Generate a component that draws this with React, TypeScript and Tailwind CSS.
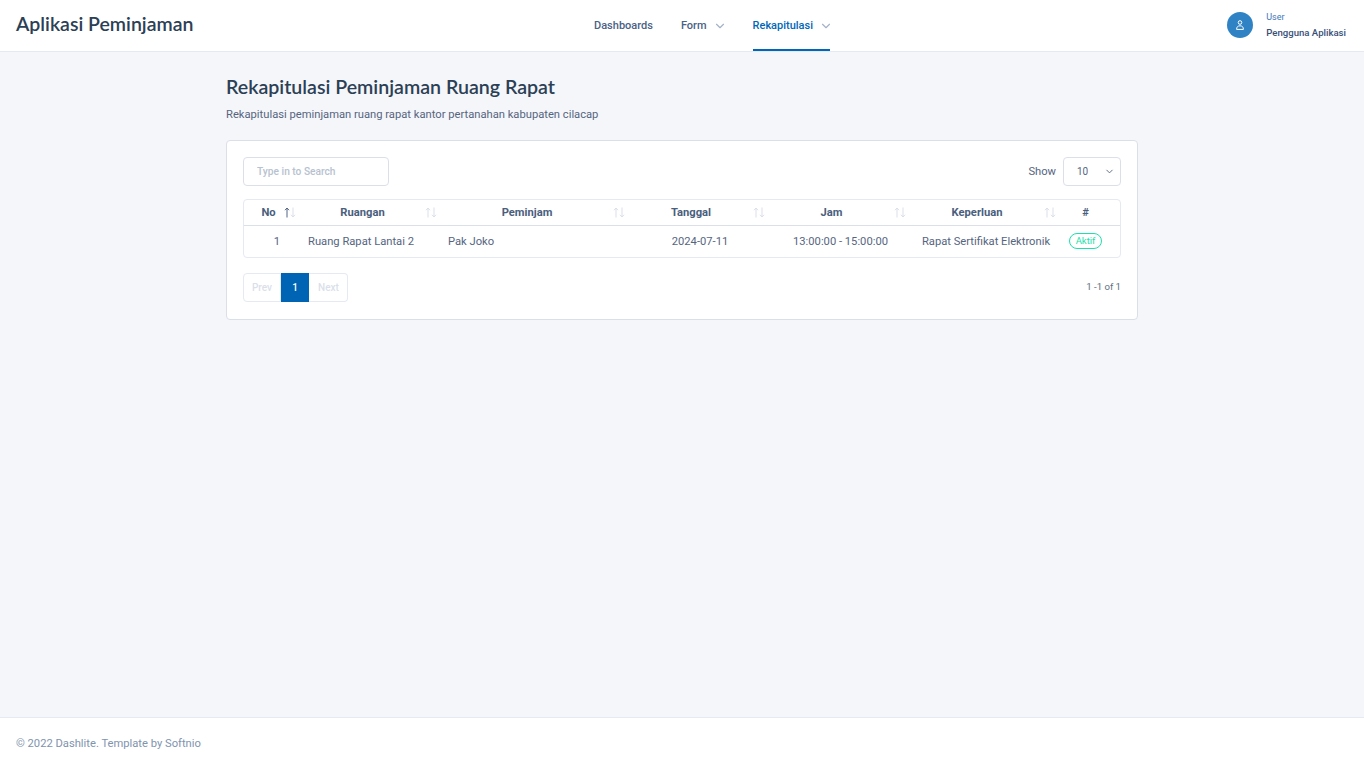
import React from 'react';
import { ChevronDown } from 'lucide-react';

const heading = "font-['Lato','Noto_Sans',sans-serif]";

const columns = [
  { label: 'No', width: 'w-[56px]', textPad: 'pl-[9px]', arrowActive: true },
  { label: 'Ruangan', width: 'w-[141px]', textPad: 'pl-0' },
  { label: 'Peminjam', width: 'w-[188px]', textPad: 'pl-0' },
  { label: 'Tanggal', width: 'w-[140px]', textPad: 'pl-0' },
  { label: 'Jam', width: 'w-[141px]', textPad: 'pl-0' },
  { label: 'Keperluan', width: 'w-[150px]', textPad: 'pl-0' },
];

function SortArrows({ active }: { active?: boolean }) {
  return (
    <svg width="12" height="11" viewBox="0 0 12 11" fill="none" strokeWidth="1" className="shrink-0">
      <path d="M3 10.5V1M1 3.2 3 1l2 2.2" stroke={active ? '#526484' : '#dbdfea'} />
      <path d="M9 .5V10M7 7.8 9 10l2-2.2" stroke="#dbdfea" />
    </svg>
  );
}

function UserIcon() {
  return (
    <svg width="8" height="10" viewBox="0 0 8 10" fill="none" stroke="white" strokeWidth="1">
      <circle cx="4" cy="2.5" r="1.8" />
      <path d="M.6 9.4c0-2.4 1.2-3.6 3.4-3.6s3.4 1.2 3.4 3.6z" />
    </svg>
  );
}

export default function App() {
  return (
    <div className="min-h-[767px] flex flex-col bg-[#f5f6fa] font-['Roboto',sans-serif] text-[#56657f] text-[11.2px]">
      <header className="h-[52px] bg-white border-b border-[#e5e9f2] flex items-stretch pl-4 pr-[18px]">
        <div className={`${heading} text-[19.5px] font-semibold text-[#2b4055] leading-[48px] w-[578px]`}>Aplikasi Peminjaman</div>
        <nav className="flex items-stretch gap-[28px] text-[11px] font-medium text-[#4a6285]">
          <a className="flex items-center pt-[1px]">Dashboards</a>
          <a className="flex items-center pt-[1px]">
            Form <ChevronDown size={14} className="text-[#a5b3c8] ml-[6px] -mr-[2px] -mt-[1px]" />
          </a>
          <a className="flex items-center pt-[3px] text-[#0067b8] border-b-2 border-[#0067b8]">
            Rekapitulasi <ChevronDown size={14} className="text-[#a5b3c8] ml-[6px] -mr-[3px] -mt-[1px]" />
          </a>
        </nav>
        <div className="ml-auto flex items-center gap-[13px]">
          <div className="w-[26px] h-[26px] mb-[1px] rounded-full bg-[#2f83c4] flex items-center justify-center">
            <UserIcon />
          </div>
          <div className="flex flex-col gap-[4px] pb-[1px]">
            <span className="text-[9px] leading-[11px] text-[#4078b8]">User</span>
            <span className="text-[9.6px] leading-[12px] font-medium text-[#3a4f78]">Pengguna Aplikasi</span>
          </div>
        </div>
      </header>

      <main className="flex-1 w-[912px] mx-auto pt-[23px]">
        <h1 className={`${heading} text-[19.6px] leading-[24px] font-semibold text-[#2b4055]`}>Rekapitulasi Peminjaman Ruang Rapat</h1>
        <p className="mt-[8px] leading-[16px]">Rekapitulasi peminjaman ruang rapat kantor pertanahan kabupaten cilacap</p>

        <section className="mt-[17px] h-[180px] bg-white border border-[#dbdfea] rounded-[4px] px-4 pt-4">
          <div className="flex items-center justify-between">
            <input
              placeholder="Type in to Search"
              className="w-[146px] h-[29px] border border-[#dbdfea] rounded-[4px] px-[13px] text-[10.2px] font-medium placeholder:text-[#b7c2d0] outline-none"
            />
            <div className="flex items-center gap-[7px]">
              <span className="pt-[1px]">Show</span>
              <div className="w-[58px] h-[29px] border border-[#dbdfea] rounded-[4px] pl-[13px] pr-[5px] flex items-center justify-between text-[10px]">
                10 <ChevronDown size={11} strokeWidth={2} />
              </div>
            </div>
          </div>

          <div className="mt-[13px] border border-[#e5e9f2] rounded-[4px]">
            <table className="w-full table-fixed border-collapse">
              <thead>
                <tr className="h-[25px] border-b border-[#dbdfea]">
                  {columns.map((col) => (
                    <th key={col.label} className={`${col.width} p-0 pl-2 pr-[4px] font-bold text-[#4a5e7d]`}>
                      <div className="flex items-center">
                        <span className={`flex-1 text-center pt-[2px] ${col.textPad}`}>{col.label}</span>
                        <span className="ml-2"><SortArrows active={col.arrowActive} /></span>
                      </div>
                    </th>
                  ))}
                  <th className="p-0 pt-[2px] pr-[9px] font-bold text-[#4a5e7d]">#</th>
                </tr>
              </thead>
              <tbody>
                <tr className="h-[32px]">
                  <td className="p-0 pt-[2px] text-center pl-[10px]">1</td>
                  <td className="p-0 pt-[2px] pl-2">Ruang Rapat Lantai 2</td>
                  <td className="p-0 pt-[2px] pl-[7px]">Pak Joko</td>
                  <td className="p-0 pt-[2px] text-center pl-[2px]">2024-07-11</td>
                  <td className="p-0 pt-[2px] text-center pl-[2px]">13:00:00 - 15:00:00</td>
                  <td className="p-0 pt-[2px] text-center pl-[2px]">Rapat Sertifikat Elektronik</td>
                  <td className="p-0 pr-[9px]">
                    <div className="flex justify-center">
                      <span className="h-[16px] w-[33px] rounded-full border border-[#1ee0ac] text-[#1ee0ac] text-[9.5px] leading-[14px] text-center">Aktif</span>
                    </div>
                  </td>
                </tr>
              </tbody>
            </table>
          </div>

          <div className="mt-[15px] flex items-center justify-between">
            <div className="flex h-[29px] text-[10px] font-medium text-[#dbdfea]">
              <span className="w-[38px] border border-[#e5e9f2] rounded-l-[4px] flex items-center justify-center">Prev</span>
              <span className="w-[28px] bg-[#0064b4] text-white flex items-center justify-center">1</span>
              <span className="w-[39px] pl-[1px] border border-l-0 border-[#e5e9f2] rounded-r-[4px] flex items-center justify-center">Next</span>
            </div>
            <span className="text-[9.6px] text-[#5e6f7e]">1 -1 of 1</span>
          </div>
        </section>
      </main>

      <footer className="h-[50px] bg-white border-t border-[#e5e9f2] flex items-center pt-1 px-4 text-[11.2px] text-[#8094ae]">
        © 2022 Dashlite. Template by Softnio
      </footer>
    </div>
  );
}
